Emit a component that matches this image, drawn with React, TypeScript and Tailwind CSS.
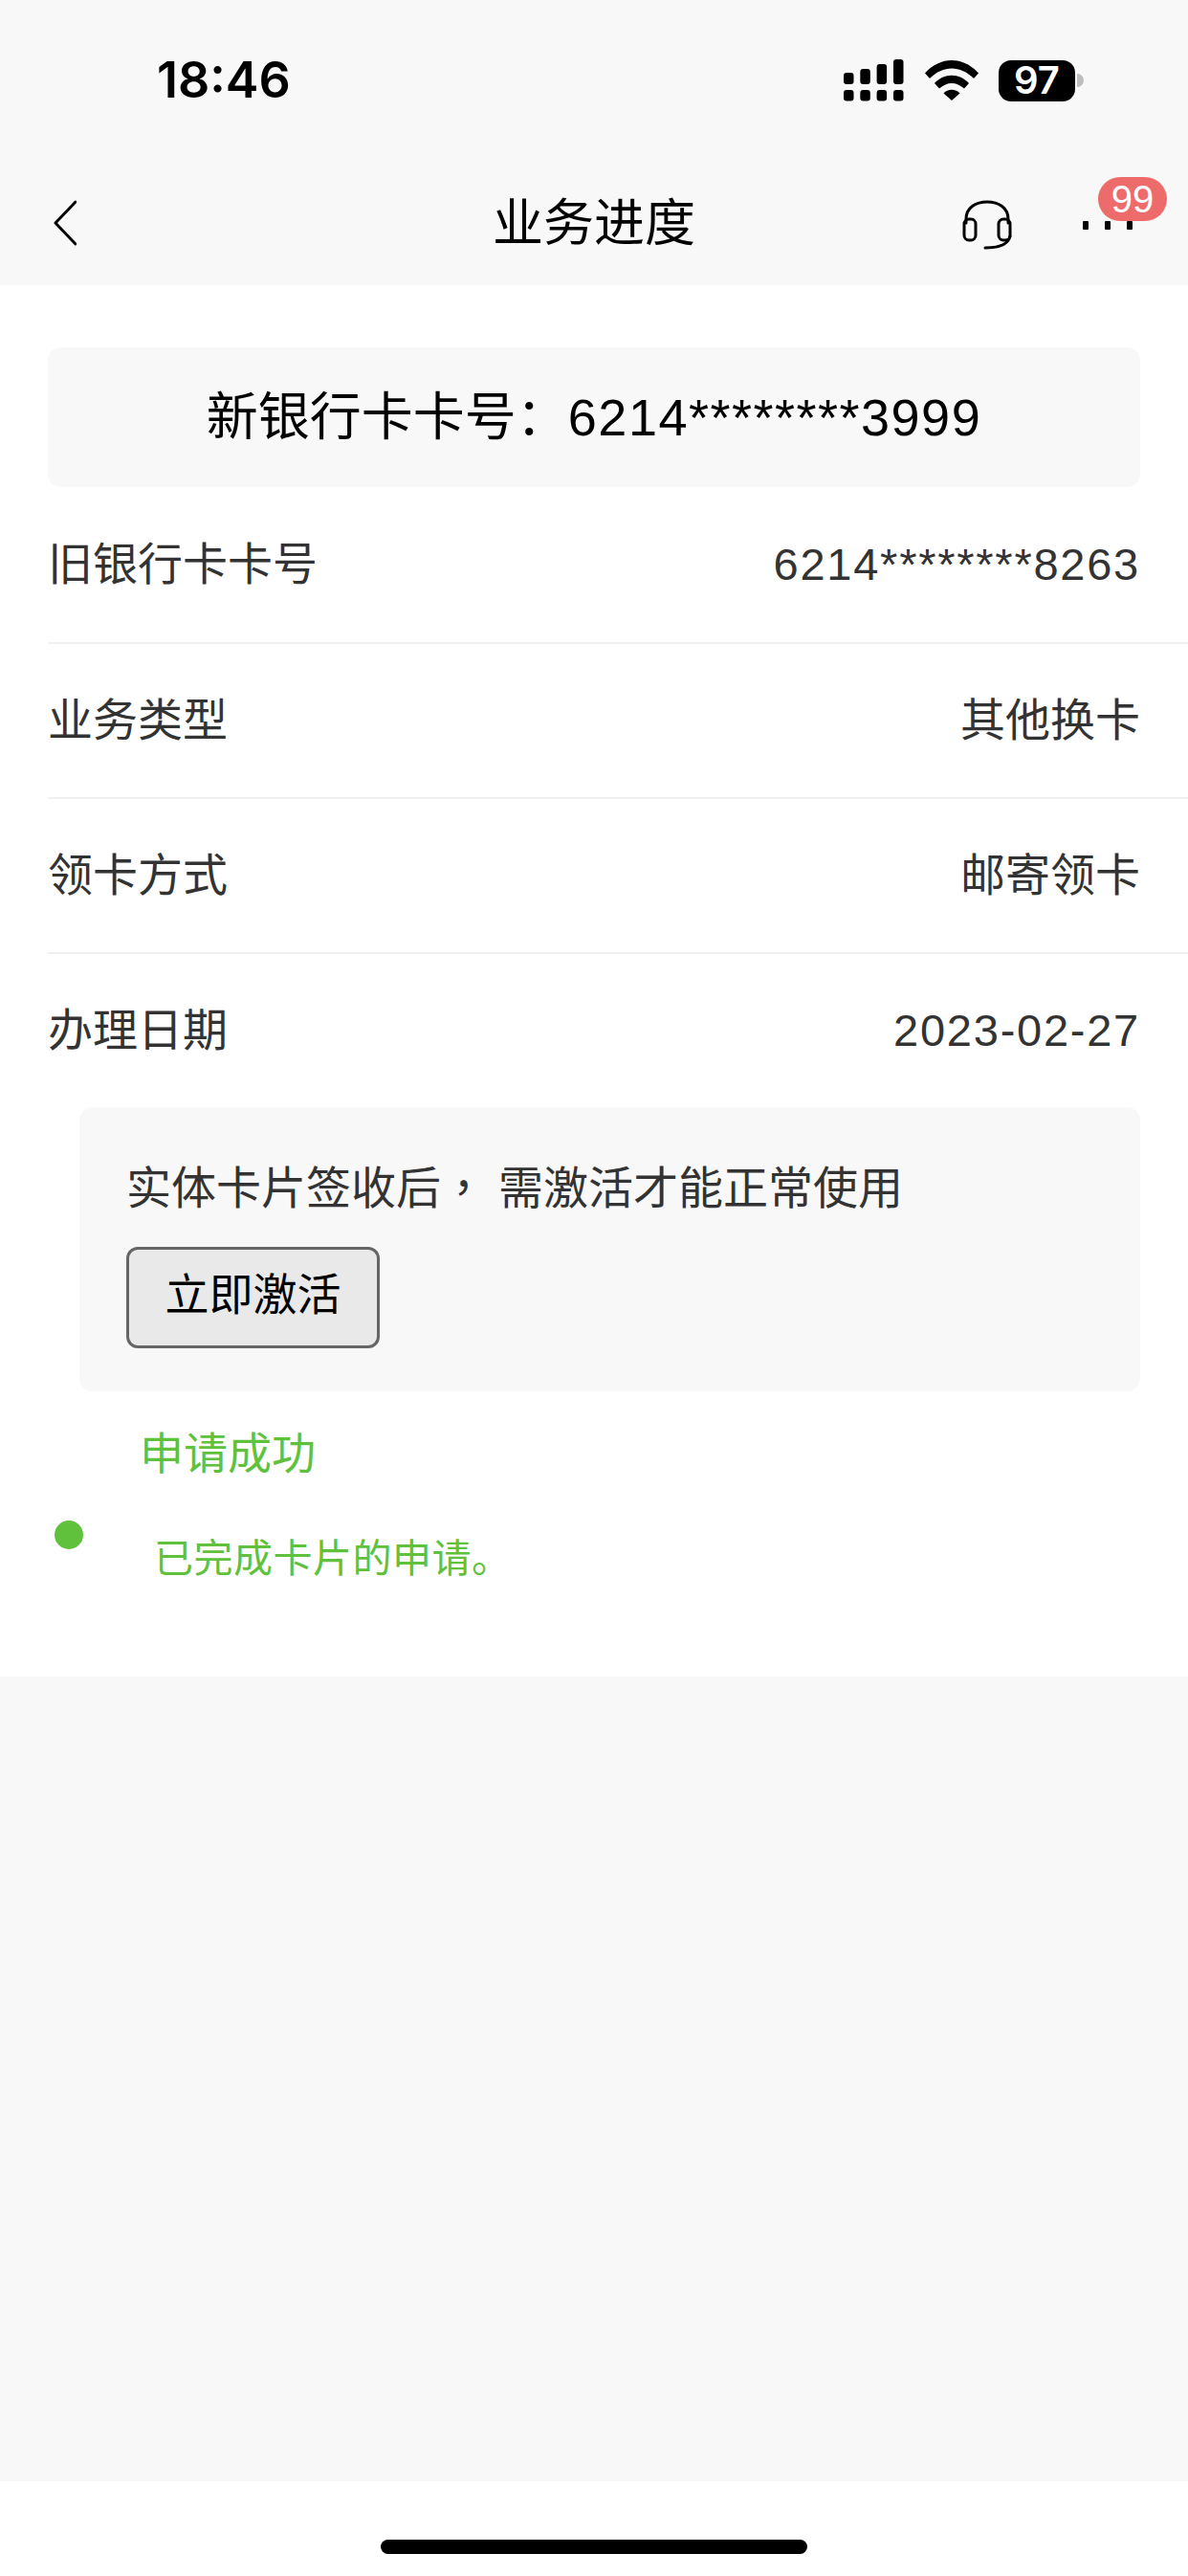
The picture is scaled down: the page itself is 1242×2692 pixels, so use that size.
const font = { fontFamily: '"Liberation Sans", "Noto Sans CJK SC", sans-serif' };
const inter = { fontFamily: '"Inter", sans-serif' };
const tc = { fontFamily: '"Noto Sans CJK TC", sans-serif' };

function Row({ label, value, border = true, h = "h-[162px]", latin = false }: { label: string; value: string; border?: boolean; h?: string; latin?: boolean }) {
  return (
    <div className={`ml-[50px] pr-[50px] flex items-center justify-between text-[47px] text-[#333] ${h} ${border ? "border-b-2 border-[#f0f0f0]" : ""}`}>
      <span>{label}</span>
      <span className={latin ? "tracking-[1.75px]" : ""}>{value}</span>
    </div>
  );
}

function StatusIcons() {
  return (
    <div className="flex items-center">
      <svg width="64" height="44" viewBox="0 0 64 44" fill="#000">
        <rect x="0" y="14" width="10.5" height="12" rx="3" />
        <rect x="17.3" y="10" width="10.5" height="16" rx="3" />
        <rect x="34.6" y="5" width="10.5" height="21" rx="3" />
        <rect x="52" y="0" width="10.5" height="26" rx="3" />
        <rect x="0" y="32" width="10.5" height="11.5" rx="3" />
        <rect x="17.3" y="32" width="10.5" height="11.5" rx="3" />
        <rect x="34.6" y="32" width="10.5" height="11.5" rx="3" />
        <rect x="52" y="32" width="10.5" height="11.5" rx="3" />
      </svg>
      <svg className="ml-[21px]" width="56" height="42" viewBox="0 0 56 42" fill="#000">
        <path d="M0 13.5 C16 -4.5 40 -4.5 56 13.5 L51 19 C37 5 19 5 5 19 Z" />
        <path d="M10 24 C20 13 36 13 46 24 L41 29.5 C33 22 23 22 15 29.5 Z" />
        <path d="M19.5 34.5 C24 29.5 32 29.5 36.5 34.5 L28 42 Z" />
      </svg>
      <div style={inter} className="relative ml-[21px] h-[43px] w-[80px] rounded-[13px] bg-black flex items-center justify-center text-white text-[40px] font-semibold leading-none">
        97
        <span className="absolute left-[82px] top-[14px] h-[14px] w-[7px] rounded-r-full bg-[#bdbdbd]" />
      </div>
      <div className="w-[9px]" />
    </div>
  );
}

export default function App() {
  return (
    <div style={font} className="w-[1242px] h-[2692px] bg-white flex flex-col overflow-hidden">
      <header className="h-[298px] bg-[#f8f8f8] flex flex-col">
        <div className="h-[168px] pl-[164px] pr-[109px] flex items-start justify-between pt-[53px]">
          <span style={inter} className="text-[52px] leading-[62px] font-semibold text-black">18:46</span>
          <div className="pt-[9px]"><StatusIcons /></div>
        </div>
        <div className="relative flex-1 flex items-start justify-between pl-[56px] pr-[58px] pt-[41px]">
          <svg width="24" height="48" viewBox="0 0 24 48" fill="none" stroke="#000" strokeWidth="3" strokeLinecap="round" strokeLinejoin="round">
            <path d="M23 2 L2 24 L23 46" />
          </svg>
          <span className="absolute left-0 right-0 top-[36px] text-center text-[53px] leading-[60px] text-black">业务进度</span>
          <div className="flex items-start">
            <svg width="52" height="52" viewBox="0 0 52 52" fill="none" stroke="#000" strokeWidth="3" strokeLinecap="round">
              <path d="M4 24 V20 C4 8 14 2 26 2 C38 2 48 8 48 20 V24" />
              <rect x="2" y="20" width="12" height="22" rx="5" />
              <rect x="38" y="20" width="12" height="22" rx="5" />
              <path d="M50 38 C48 46 40 50 24 50" />
            </svg>
            <div className="relative ml-[74px] mt-[22px] flex gap-[17px]">
              <span className="h-[9px] w-[6px] rounded-[1px] bg-black" />
              <span className="h-[9px] w-[6px] rounded-[1px] bg-black" />
              <span className="h-[9px] w-[6px] rounded-[1px] bg-black" />
              <span className="absolute left-[16px] top-[-46px] h-[46px] w-[72px] rounded-full bg-[#ee6b6b] flex items-center justify-center text-[40px] text-white leading-none">99</span>
            </div>
          </div>
        </div>
      </header>

      <main className="h-[1454px] bg-white flex flex-col">
        <div className="mx-[50px] mt-[65px] h-[146px] rounded-[14px] bg-[#f8f8f8] flex items-center justify-center text-[54px] text-black">
          <span>新银行卡卡号：<span className="tracking-[1.5px]">6214********3999</span></span>
        </div>
        <Row label="旧银行卡卡号" value="6214********8263" h="h-[164px]" latin />
        <Row label="业务类型" value="其他换卡" />
        <Row label="领卡方式" value="邮寄领卡" />
        <Row label="办理日期" value="2023-02-27" border={false} h="h-[160px]" latin />
        <div className="ml-[83px] mr-[50px] h-[297px] rounded-[14px] bg-[#f8f8f8] pl-[49px] pt-[54px]">
          <div className="text-[47px] leading-[54px] text-[#333]">实体卡片签收后<span style={tc}>，</span> 需激活才能正常使用</div>
          <button className="mt-[34px] block h-[106px] w-[265px] rounded-[12px] border-[3px] border-[#666] bg-[#e9e9e9] pb-[5px] text-[46px] text-black">立即激活</button>
        </div>
        <div className="relative flex-1">
          <div className="absolute left-[146px] top-[38px] text-[46px] leading-[54px] text-[#5fc13c]">申请成功</div>
          <span className="absolute left-[57px] top-[135px] h-[30px] w-[30px] rounded-full bg-[#5fc13c]" />
          <div className="absolute left-[161px] top-[150px] text-[41px] tracking-[0.5px] leading-[50px] text-[#5fc13c]">已完成卡片的申请。</div>
        </div>
      </main>

      <div className="h-[841px] bg-[#f8f8f8]" />
      <div className="flex-1 bg-white flex justify-center pt-[61px]">
        <div className="h-[15px] w-[446px] rounded-full bg-black" />
      </div>
    </div>
  );
}
